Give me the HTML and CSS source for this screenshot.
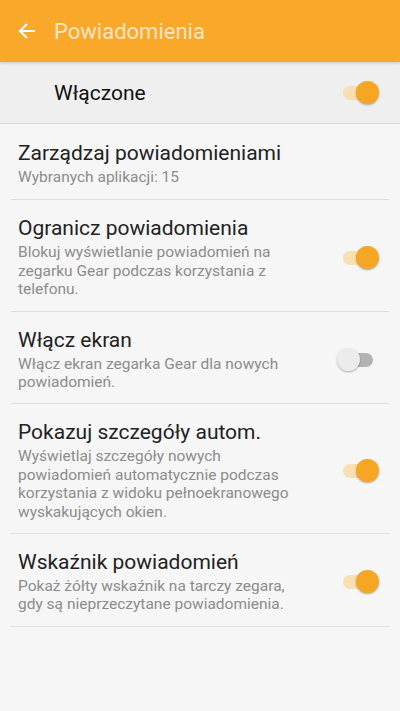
FILE: index.html
```html
<!DOCTYPE html>
<html lang="pl">
<head>
    <meta charset="UTF-8">
    <meta name="viewport" content="width=device-width, initial-scale=1.0">
    <title>Powiadomienia</title>
    <link rel="stylesheet" href="styles.css">
</head>
<body>

    <header class="app-bar">
        <svg class="back" width="20" height="20" viewBox="0 0 20 20">
            <path d="M18 10H3M10 3L3 10l7 7" fill="none" stroke="#fff" stroke-width="2.2"/>
        </svg>
        <h1 class="app-title">Powiadomienia</h1>
    </header>

    <div class="master">
        <span class="master-label">Włączone</span>
        <span class="switch on"></span>
    </div>

    <ul class="settings">
        <li class="item">
            <div class="text">
                <div class="title">Zarządzaj powiadomieniami</div>
                <div class="desc">Wybranych aplikacji: 15</div>
            </div>
        </li>
        <li class="item">
            <div class="text">
                <div class="title">Ogranicz powiadomienia</div>
                <div class="desc">Blokuj wyświetlanie powiadomień na zegarku Gear podczas korzystania z telefonu.</div>
            </div>
            <span class="switch on"></span>
        </li>
        <li class="item">
            <div class="text">
                <div class="title">Włącz ekran</div>
                <div class="desc">Włącz ekran zegarka Gear dla nowych powiadomień.</div>
            </div>
            <span class="switch"></span>
        </li>
        <li class="item">
            <div class="text">
                <div class="title">Pokazuj szczegóły autom.</div>
                <div class="desc">Wyświetlaj szczegóły nowych powiadomień automatycznie podczas korzystania z widoku pełnoekranowego wyskakujących okien.</div>
            </div>
            <span class="switch on"></span>
        </li>
        <li class="item">
            <div class="text">
                <div class="title">Wskaźnik powiadomień</div>
                <div class="desc">Pokaż żółty wskaźnik na tarczy zegara, gdy są nieprzeczytane powiadomienia.</div>
            </div>
            <span class="switch on"></span>
        </li>
    </ul>

</body>
</html>
```

FILE: styles.css
```css
body {
    font-family: Roboto, 'Noto Sans', sans-serif;
    background-color: #f6f6f6;
    color: #212121;
    margin: 0;
    padding: 0;
    min-height: 100vh;
}

.app-bar {
    background-color: #f9a82a;
    height: 62px;
    display: flex;
    align-items: center;
    padding: 0 0 0 17px;
    box-shadow: 0 1px 3px rgba(0, 0, 0, 0.18);
    position: relative;
}

.app-title {
    margin: 0 0 0 17px;
    font-size: 22px;
    font-weight: normal;
    color: rgba(255, 255, 255, 0.72);
}

.master {
    background-color: #efefef;
    height: 61px;
    display: flex;
    align-items: center;
    justify-content: space-between;
    padding: 0 21px 0 54px;
    border-bottom: 1px solid #dcdcdc;
}

.master-label {
    font-size: 21px;
    color: #111;
}

.settings {
    list-style: none;
    margin: 0;
    padding: 0 11px;
}

.item {
    display: flex;
    align-items: center;
    padding: 16px 10px 12px 7px;
    border-bottom: 1px solid #dedede;
}

.item:first-child {
    padding-top: 17px;
    padding-bottom: 13px;
}

.text {
    flex: 1;
}

.title {
    font-size: 21px;
    line-height: 24px;
    color: #222;
}

.desc {
    margin-top: 3px;
    font-size: 15.5px;
    line-height: 18.4px;
    color: #8c8c8c;
    max-width: 282px;
}

.switch {
    position: relative;
    width: 36px;
    height: 24px;
    flex-shrink: 0;
}

.switch::before {
    content: "";
    position: absolute;
    left: 0;
    top: 5px;
    width: 30px;
    height: 14px;
    border-radius: 7px;
    background-color: #b3b3b3;
}

.switch::after {
    content: "";
    position: absolute;
    left: -6px;
    top: 0;
    width: 23px;
    height: 23px;
    border-radius: 50%;
    background-color: #ececec;
    box-shadow: 0 1px 2px rgba(0, 0, 0, 0.3);
}

.switch.on::before {
    background-color: #f8dfb0;
}

.switch.on::after {
    left: 13px;
    background-color: #f5a623;
}
```
